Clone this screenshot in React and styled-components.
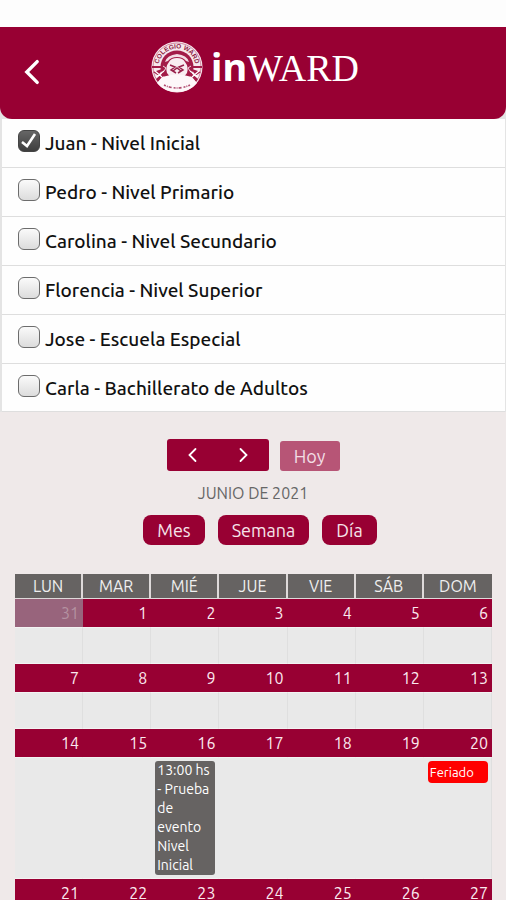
import React, { useState } from 'react';
import styled, { createGlobalStyle } from "styled-components";

const GlobalStyle = createGlobalStyle`
  * {
    box-sizing: border-box;
  }

  html {
    scrollbar-width: none;
  }

  body {
    margin: 0;
    background: #efe9e9;
    font-family: Ubuntu, "Noto Sans", "Open Sans", sans-serif;
  }

  button {
    font: inherit;
    border: none;
    cursor: pointer;
  }
`;

const Screen = styled.div`
  min-height: 100vh;
  background: #efe9e9;
`;

const StatusBar = styled.div`
  height: 27px;
  background: #fdfdfd;
`;

const HeaderBack = styled.div`
  background: #e4e4e4;
`;

const Header = styled.header`
  display: grid;
  grid-template-columns: 64px 1fr 60px;
  align-items: center;
  height: 92px;
  padding-bottom: 12px;
  background: #980033;
  border-radius: 0 0 12px 12px;
`;

const BackButton = styled.button`
  display: flex;
  justify-content: center;
  padding: 8px 0;
  margin-top: 10px;
  background: none;
`;

const Logo = styled.div`
  display: flex;
  align-items: center;
  justify-content: center;
  gap: 8px;
  color: #fff;
`;

const LogoText = styled.div`
  display: flex;
  align-items: baseline;
  font-size: 38px;
  line-height: 48px;
`;

const LogoIn = styled.span`
  font-family: "Noto Sans", sans-serif;
  font-weight: 700;
`;

const LogoWard = styled.span`
  font-family: "Liberation Serif", serif;
`;

const StudentList = styled.ul`
  margin: 0;
  padding: 0;
  list-style: none;
  background: #fefefe;
  border-left: 2px solid #e4e4e4;
  border-right: 1px solid #e4e4e4;
`;

const StudentItem = styled.li`
  display: flex;
  align-items: center;
  height: 49px;
  padding-left: 16px;
  border-bottom: 1px solid #dedede;

  &:last-child {
    height: 48px;
  }
`;

const StudentLabel = styled.label`
  display: flex;
  align-items: center;
  gap: 5px;
  color: #111;
  font-size: 19px;
  font-weight: 500;
  line-height: 24px;
`;

const CheckBox = styled.span`
  display: grid;
  margin-bottom: 4px;

  & input,
  & svg {
    grid-area: 1 / 1;
  }

  & svg {
    pointer-events: none;
  }
`;

const CheckInput = styled.input`
  appearance: none;
  width: 22px;
  height: 22px;
  margin: 0;
  border: 1px solid #6c6c6c;
  border-radius: 6px;
  background: linear-gradient(#fafafa, #dcdcdc);

  &:checked {
    border-color: #444;
    background: linear-gradient(#666, #3e3e3e);
  }
`;

const Controls = styled.section`
  display: flex;
  flex-direction: column;
  align-items: center;
  padding-top: 27px;
`;

const NavRow = styled.div`
  display: flex;
  align-items: flex-end;
  gap: 11px;
`;

const NavGroup = styled.div`
  display: flex;
  overflow: hidden;
  border-radius: 3px;
  background: #980033;
`;

const NavButton = styled.button`
  display: flex;
  align-items: center;
  justify-content: center;
  width: 51px;
  height: 32px;
  padding: 0;
  background: none;
`;

const TodayButton = styled.button`
  width: 60px;
  height: 30px;
  padding: 0;
  border-radius: 3px;
  background: #b75576;
  color: #f2dde4;
  font-size: 18px;
  line-height: 30px;
`;

const MonthTitle = styled.h2`
  margin: 11px 0;
  color: #666;
  font-size: 16px;
  font-weight: 400;
  line-height: 22px;
`;

const ViewRow = styled.div`
  display: flex;
  gap: 13px;
  padding-left: 14px;
`;

const ViewButton = styled.button`
  height: 30px;
  padding: 0 14px;
  border-radius: 8px;
  background: #980033;
  color: #f6e4ea;
  font-size: 18px;
  line-height: 30px;
`;

const CalendarBox = styled.section`
  padding: 29px 14px 0 15px;
`;

const Calendar = styled.table`
  width: 100%;
  table-layout: fixed;
  border-collapse: separate;
  border-spacing: 0;
`;

const DayName = styled.th`
  height: 25px;
  padding: 0;
  border-right: 2px solid #dedada;
  border-bottom: 1px solid #dedada;
  background: #666362;
  color: #efefef;
  font-size: 16px;
  font-weight: 400;
  line-height: 24px;

  &:last-child {
    border-right: none;
  }
`;

const DayNumber = styled.td`
  height: 28px;
  padding: 0 4px 0 0;
  background: ${(props) => (props.$other ? "#98647c" : "#980033")};
  color: ${(props) => (props.$other ? "#b492a1" : "#fbe9ef")};
  font-size: 16px;
  line-height: 28px;
  text-align: right;
`;

const DayBody = styled.td`
  height: ${(props) => (props.$busy ? 122 : 37)}px;
  padding: 3px 3px 0 ${(props) => (props.$busy ? 4 : 0)}px;
  border-top: 1px solid #f3f3f3;
  border-bottom: 1px solid #f3f3f3;
  border-right: 1px solid ${(props) => (props.$busy ? "#e9e9e9" : "#dfdfdf")};
  background: #e9e9e9;
  vertical-align: top;

  &:last-child {
    border-right-color: #dfdfdf;
  }
`;

const EventCard = styled.div`
  padding: 0 2px;
  border-radius: ${(props) => (props.$holiday ? 4 : 3)}px;
  background: ${(props) => (props.$holiday ? "#ff0000" : "#666362")};
  color: #fff;
  font-size: ${(props) => (props.$holiday ? 13 : 14)}px;
  line-height: ${(props) => (props.$holiday ? 22 : 19)}px;
`;

const students = [
  "Juan - Nivel Inicial",
  "Pedro - Nivel Primario",
  "Carolina - Nivel Secundario",
  "Florencia - Nivel Superior",
  "Jose - Escuela Especial",
  "Carla - Bachillerato de Adultos",
];

const dayNames = ["LUN", "MAR", "MIÉ", "JUE", "VIE", "SÁB", "DOM"];

const weeks = [
  [31, 1, 2, 3, 4, 5, 6],
  [7, 8, 9, 10, 11, 12, 13],
  [14, 15, 16, 17, 18, 19, 20],
  [21, 22, 23, 24, 25, 26, 27],
];

const events = {
  16: { text: "13:00 hs - Prueba de evento Nivel Inicial" },
  20: { text: "Feriado", holiday: true },
};

const Chevron = ({ width, height, right, stroke }) => (
  <svg width={width} height={height} viewBox="0 0 12 20" fill="none" aria-hidden="true">
    <path d={right ? "M2 2l8 8-8 8" : "M10 2l-8 8 8 8"} stroke="#fff" strokeWidth={stroke} strokeLinecap="round" />
  </svg>
);

const Emblem = () => (
  <svg width="52" height="52" viewBox="0 0 52 52" aria-hidden="true">
    <defs>
      <path id="topArc" d="M7.5 26a18.5 18.5 0 0 1 37 0" />
    </defs>
    <circle cx="26" cy="26" r="25.5" fill="#f7e8ed" />
    <circle cx="26" cy="26" r="24" fill="none" stroke="#b5486c" strokeWidth=".6" />
    <circle cx="26" cy="26" r="16.5" fill="#a31c48" />
    {/* side ribbons */}
    <path d="M1 25h10v2H1zM41 25h10v2H41z" fill="#a31c48" />
    <path d="M2 31l9-3-3 7zM50 31l-9-3 3 7zM5 38l8-7 1 3-7 7zM47 38l-8-7-1 3 7 7z" fill="#a31c48" />
    <path d="M4 30l7 6M48 30l-7 6M5 36l8-6M47 36l-8-6" stroke="#fff" strokeWidth="1.3" />
    {/* shield */}
    <path d="M14 21q2-7 12-8 10 1 12 8l-3-1q-3-4-9-4t-9 4z" fill="#f3dce4" />
    <path d="M18 21q2-4 8-4t8 4q4 5 2 11-4 6-10 6t-10-6q-2-6 2-11z" fill="#f9edf1" />
    <path d="M19 24l5 2-4 3 5 3M33 24l-5 2 4 3-5 3M22 30l4-3 4 3" fill="none" stroke="#98204a" strokeWidth="1.5" />
    <path d="M12 25l3 2-2 3M40 25l-3 2 2 3" fill="none" stroke="#f3dce4" />
    {/* lower banner */}
    <path d="M11 36q15-5 30 0l5 6q-7 9-20 9T6 42z" fill="#fdf7f9" />
    <text fill="#8d1d43" fontFamily="Liberation Sans, sans-serif" fontSize="6.5" fontWeight="700">
      <textPath href="#topArc" startOffset="50%" textAnchor="middle">COLEGIO WARD</textPath>
    </text>
    <path d="M13 44q13 6 26 0" fill="none" stroke="#b04c70" strokeWidth="1.6" strokeDasharray="2 1 1 1 3 2" />
  </svg>
);

const Student = ({ name, initial }) => {
  const [checked, setChecked] = useState(initial);
  return (
    <StudentItem>
      <StudentLabel>
        <CheckBox>
          <CheckInput type="checkbox" checked={checked} onChange={(e) => setChecked(e.target.checked)} />
          {checked && (
            <svg width="22" height="22" viewBox="0 0 22 22" fill="none" aria-hidden="true">
              <path d="M4 12l5 4 8-12" stroke="#fff" strokeWidth="2.6" />
            </svg>
          )}
        </CheckBox>
        {name}
      </StudentLabel>
    </StudentItem>
  );
};

const App = () => {
  return (
    <>
      <GlobalStyle />
      <Screen>
        <StatusBar />
        <HeaderBack>
          <Header>
            <BackButton aria-label="Volver">
              <Chevron width={16} height={26} stroke={2.6} />
            </BackButton>
            <Logo>
              <Emblem />
              <LogoText>
                <LogoIn>in</LogoIn>
                <LogoWard>WARD</LogoWard>
              </LogoText>
            </Logo>
          </Header>
        </HeaderBack>

        <StudentList>
          {students.map((name, i) => (
            <Student key={name} name={name} initial={i === 0} />
          ))}
        </StudentList>

        <Controls>
          <NavRow>
            <NavGroup>
              <NavButton aria-label="Anterior">
                <Chevron width={9} height={16} stroke={2.4} />
              </NavButton>
              <NavButton aria-label="Siguiente">
                <Chevron width={9} height={16} stroke={2.4} right />
              </NavButton>
            </NavGroup>
            <TodayButton>Hoy</TodayButton>
          </NavRow>
          <MonthTitle>JUNIO DE 2021</MonthTitle>
          <ViewRow>
            <ViewButton>Mes</ViewButton>
            <ViewButton>Semana</ViewButton>
            <ViewButton>Día</ViewButton>
          </ViewRow>
        </Controls>

        <CalendarBox>
          <Calendar>
            <thead>
              <tr>
                {dayNames.map((day) => (
                  <DayName key={day} scope="col">{day}</DayName>
                ))}
              </tr>
            </thead>
            <tbody>
              {weeks.map((week) => {
                const busy = week.some((day) => events[day]);
                return (
                  <React.Fragment key={week[0]}>
                    <tr>
                      {week.map((day) => (
                        <DayNumber key={day} $other={day === 31}>{day}</DayNumber>
                      ))}
                    </tr>
                    <tr>
                      {week.map((day) => (
                        <DayBody key={day} $busy={busy}>
                          {events[day] && (
                            <EventCard $holiday={events[day].holiday}>{events[day].text}</EventCard>
                          )}
                        </DayBody>
                      ))}
                    </tr>
                  </React.Fragment>
                );
              })}
            </tbody>
          </Calendar>
        </CalendarBox>
      </Screen>
    </>
  );
};

export default App;
